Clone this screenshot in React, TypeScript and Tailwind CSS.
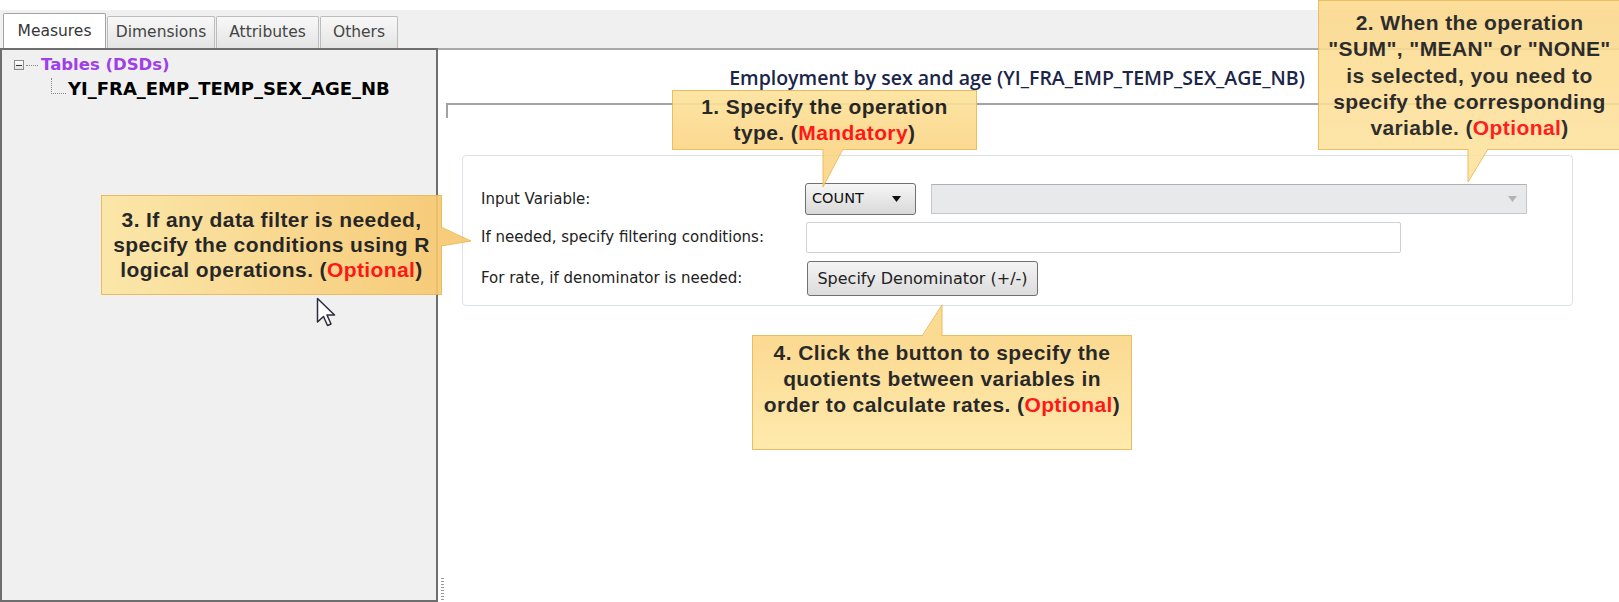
import React from 'react';

const tabs = [
  { label: 'Measures', active: true, width: 'w-[103px]' },
  { label: 'Dimensions', active: false, width: 'w-[108px]' },
  { label: 'Attributes', active: false, width: 'w-[103px]' },
  { label: 'Others', active: false, width: 'w-[78px]' },
];

function Red({ children }: { children: React.ReactNode }) {
  return <span className="text-[#ff0000]">{children}</span>;
}

function ComboArrow({ color }: { color: string }) {
  return (
    <svg width="9" height="6" viewBox="0 0 9 6">
      <polygon points="0,0 9,0 4.5,6" fill={color} />
    </svg>
  );
}

function TabStrip() {
  return (
    <div className="h-[38px] bg-[#f0f0f0] flex items-end gap-[1px] pl-[3px]">
      {tabs.map((tab) =>
        tab.active ? (
          <div
            key={tab.label}
            className={`${tab.width} h-[35px] bg-white border border-b-0 border-[#a3a3a3] rounded-t-[2px] flex items-center justify-center pt-[1px] text-[15.5px] text-[#363636]`}
          >
            {tab.label}
          </div>
        ) : (
          <div
            key={tab.label}
            className={`${tab.width} h-[32px] bg-gradient-to-b from-[#f8f8f8] to-[#e4e4e4] border border-b-0 border-[#bcbcbc] rounded-t-[2px] flex items-center justify-center text-[15.5px] text-[#444]`}
          >
            {tab.label}
          </div>
        )
      )}
    </div>
  );
}

function TreePanel() {
  return (
    <div className="w-[438px] shrink-0 border-2 border-[#6e6e6e] bg-[#f0f0f0] pl-[12px] pt-[7px]">
      {/* Root node */}
      <div className="flex items-center h-[16px]">
        <div className="w-[10px] h-[10px] border border-[#8c8c8c] bg-gradient-to-b from-white to-[#e2e2e2] flex items-center justify-center">
          <div className="w-[6px] h-[1px] bg-[#333]" />
        </div>
        <div className="w-[12px] ml-[2px] border-t border-dotted border-[#888]" />
        <span className="ml-[3px] text-[16.5px] font-bold text-[#9f3fe8] leading-[16px]">Tables (DSDs)</span>
      </div>
      {/* Child node */}
      <div className="flex items-end h-[26px] pl-[37px]">
        <div className="w-[15px] h-[16px] mb-[5px] border-l border-b border-dotted border-[#888]" />
        <span className="ml-[2px] text-[18px] font-bold text-black leading-[20px]">YI_FRA_EMP_TEMP_SEX_AGE_NB</span>
      </div>
    </div>
  );
}

function MeasurePanel() {
  return (
    <div className="ml-[16px] mr-[46px] mt-[37px] h-[151px] rounded-[4px] border border-[#dce2e9] bg-white pt-[27px] pl-[18px] text-[15px] text-[#222]">
      <div className="flex items-center h-[32px]">
        <div className="w-[324px]">Input Variable:</div>
        <div className="w-[111px] h-[32px] rounded-[3px] border border-[#707070] bg-gradient-to-b from-[#f6f6f6] to-[#d9d9d9] flex items-center justify-between pl-[6px] pr-[14px] text-[14.5px] text-[#111]">
          <span>COUNT</span>
          <ComboArrow color="#111" />
        </div>
        <div className="ml-[15px] w-[596px] h-[30px] border border-[#c4c6ca] border-t-[#aeb0b4] bg-[#e8e9eb] flex items-center justify-end pr-[9px]">
          <ComboArrow color="#b3b4b7" />
        </div>
      </div>
      <div className="flex items-center h-[31px] mt-[7px]">
        <div className="w-[325px]">If needed, specify filtering conditions:</div>
        <div className="w-[595px] h-[31px] rounded-[2px] border border-[#cdd0d5] bg-white" />
      </div>
      <div className="flex items-center h-[35px] mt-[8px]">
        <div className="w-[326px]">For rate, if denominator is needed:</div>
        <button className="w-[231px] h-[35px] rounded-[3px] border border-[#707070] bg-gradient-to-b from-[#f4f4f4] to-[#dcdcdc] text-[16px] text-[#222]">
          Specify Denominator (+/-)
        </button>
      </div>
    </div>
  );
}

function Callouts() {
  const text = "font-['Liberation_Sans',Arial,sans-serif] font-bold text-[21px] tracking-[0.4px] text-[#111] text-center";
  return (
    <div className="absolute inset-0 pointer-events-none">
      {/* 1. operation type */}
      <div className="absolute inset-0 opacity-[0.9]">
        <div className={`absolute left-[672px] top-[90px] w-[305px] h-[60px] border border-[#e9b64f] bg-gradient-to-b from-[#fde39b] to-[#fbd585] pt-[3px] leading-[26px] ${text}`}>
          1. Specify the operation<br />type. (<Red>Mandatory</Red>)
        </div>
        <svg className="absolute left-[815px] top-[140px]" width="40" height="50" viewBox="815 140 40 50">
          <polygon points="823,148 843,148 823,187" fill="#fbd585" />
          <polyline points="823,149 823,187 843,149" fill="none" stroke="#e9b64f" strokeWidth="1" />
        </svg>
      </div>

      {/* 2. variable */}
      <div className="absolute inset-0 opacity-[0.88]">
        <div className={`absolute left-[1318px] top-[0px] w-[303px] h-[150px] border border-[#e9b64f] bg-gradient-to-b from-[#fcd98b] to-[#fde29d] pt-[9px] leading-[26.25px] ${text}`}>
          2. When the operation<br />"SUM", "MEAN" or "NONE"<br />is selected, you need to<br />specify the corresponding<br />variable. (<Red>Optional</Red>)
        </div>
        <svg className="absolute left-[1460px] top-[140px]" width="40" height="50" viewBox="1460 140 40 50">
          <polygon points="1468,148 1488,148 1468,182" fill="#fde29d" />
          <polyline points="1468,149 1468,182 1488,149" fill="none" stroke="#e9b64f" strokeWidth="1" />
        </svg>
      </div>

      {/* 3. filter */}
      <div className="absolute inset-0 opacity-[0.9]">
        <div className={`absolute left-[101px] top-[195px] w-[341px] h-[100px] border border-[#e9b64f] bg-gradient-to-r from-[#fde6a2] to-[#f7c86d] pt-[11px] leading-[25px] ${text}`}>
          3. If any data filter is needed,<br />specify the conditions using R<br />logical operations. (<Red>Optional</Red>)
        </div>
        <svg className="absolute left-[436px] top-[220px]" width="40" height="32" viewBox="436 220 40 32">
          <polygon points="440,227 471,241 440,246" fill="#f7c86d" />
          <polyline points="441,227 471,241 441,246" fill="none" stroke="#e9b64f" strokeWidth="1" />
        </svg>
      </div>

      {/* 4. denominator */}
      <div className="absolute inset-0 opacity-[0.9]">
        <div className={`absolute left-[752px] top-[335px] w-[380px] h-[115px] border border-[#e9b64f] bg-gradient-to-b from-[#fbd686] to-[#fee8a4] pt-[4px] leading-[26px] ${text}`}>
          4. Click the button to specify the<br />quotients between variables in<br />order to calculate rates. (<Red>Optional</Red>)
        </div>
        <svg className="absolute left-[915px] top-[300px]" width="35" height="40" viewBox="915 300 35 40">
          <polygon points="922,337 942,337 942,305" fill="#fbd686" />
          <polyline points="922,336 942,305 942,336" fill="none" stroke="#e9b64f" strokeWidth="1" />
        </svg>
      </div>

      {/* mouse pointer */}
      <svg className="absolute left-[316px] top-[297px]" width="22" height="32" viewBox="0 0 22 32">
        <path
          d="M1.5 1.5 L1.5 25 L7.5 19.5 L11.5 28.5 L15 27 L11 18 L18.5 18 Z"
          fill="#fff"
          stroke="#2c2c3c"
          strokeWidth="1.5"
          strokeLinejoin="round"
        />
      </svg>
    </div>
  );
}

export default function App() {
  return (
    <div className="relative w-[1619px] h-[602px] overflow-hidden bg-white font-['DejaVu_Sans',sans-serif]">
      <div className="h-[10px] bg-white" />
      <TabStrip />

      <div className="flex h-[554px]">
        <TreePanel />

        <div className="flex-1 flex border-t-2 border-[#a9a9a9]">
          {/* splitter grip */}
          <div className="w-[8px] shrink-0 flex flex-col justify-end gap-[2px] pl-[3px] pb-[2px]">
            {[0, 1, 2, 3, 4, 5, 6, 7].map((i) => (
              <div key={i} className="w-[3px] h-[1px] bg-[#9a9a9a]" />
            ))}
          </div>

          <div className="flex-1 flex flex-col">
            <div className="mt-[17px] pr-[31px] text-center font-['Open_Sans',sans-serif] font-semibold text-[19.5px] leading-[22px] text-[#1b2548]">
              Employment by sex and age (YI_FRA_EMP_TEMP_SEX_AGE_NB)
            </div>
            <div className="mt-[14px] h-[15px] border-t-2 border-l-2 border-[#a3a3a3]" />
            <MeasurePanel />
          </div>
        </div>
      </div>

      <Callouts />
    </div>
  );
}
